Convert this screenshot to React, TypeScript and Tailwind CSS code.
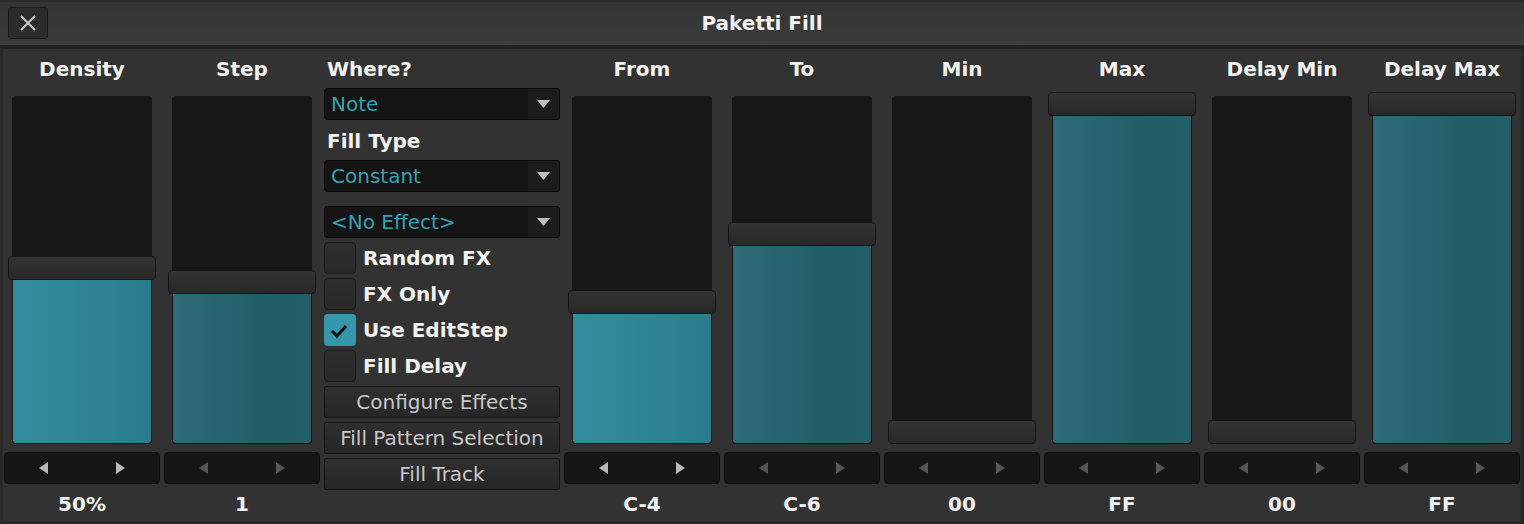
import React from 'react';

type Tone = 'bright' | 'dark';

interface SliderSpec {
  label: string;
  value: string;
  top: number; // handle offset from the top of the slider box, 0..328
  tone: Tone;
}

const FONT = { fontFamily: '"DejaVu Sans", "Liberation Sans", sans-serif' };

// 0 = full, 328 = empty
const leftSliders: SliderSpec[] = [
  { label: 'Density', value: '50%', top: 164, tone: 'bright' },
  { label: 'Step', value: '1', top: 178, tone: 'dark' },
];

const rightSliders: SliderSpec[] = [
  { label: 'From', value: 'C-4', top: 198, tone: 'bright' },
  { label: 'To', value: 'C-6', top: 130, tone: 'dark' },
  { label: 'Min', value: '00', top: 328, tone: 'dark' },
  { label: 'Max', value: 'FF', top: 0, tone: 'dark' },
  { label: 'Delay Min', value: '00', top: 328, tone: 'dark' },
  { label: 'Delay Max', value: 'FF', top: 0, tone: 'dark' },
];

const CloseIcon = () => (
  <svg width="16" height="16" viewBox="0 0 16 16" fill="none">
    <path d="M1 1L15 15M15 1L1 15" stroke="#c9c9c9" strokeWidth="2" />
  </svg>
);

const Triangle = ({ dir, color }: { dir: 'left' | 'right'; color: string }) => (
  <svg width="9" height="12" viewBox="0 0 9 12">
    {dir === 'left' ? (
      <path d="M9 0V12L0 6Z" fill={color} />
    ) : (
      <path d="M0 0V12L9 6Z" fill={color} />
    )}
  </svg>
);

const DownArrow = () => (
  <svg width="13" height="8" viewBox="0 0 13 8">
    <path d="M0 0H13L6.5 8Z" fill="#bfbfbf" />
  </svg>
);

const Slider: React.FC<{ spec: SliderSpec }> = ({ spec }) => {
  const fillHeight = 328 - spec.top;
  const arrowColor = spec.tone === 'bright' ? '#b9b9b9' : '#555555';

  return (
    <div className="flex w-[156px] flex-col">
      <div className="mt-[8px] h-[24px] text-center text-[20px] leading-[24px] font-bold text-[#f2f2f2]">
        {spec.label}
      </div>

      <div className="relative mt-[11px] h-[356px]">
        <div className="relative mx-[8px] my-[4px] h-[348px] overflow-hidden rounded-[4px] bg-[#171717]">
          {fillHeight > 0 && (
            <div
              className={
                spec.tone === 'bright'
                  ? 'absolute right-0 bottom-0 left-0 rounded-b-[4px] border border-t-0 border-[#0f1416] bg-linear-to-r from-[#348d9e] via-[#2e8596] to-[#2a7d8d]'
                  : 'absolute right-0 bottom-0 left-0 rounded-b-[4px] border border-t-0 border-[#0f1416] bg-linear-to-r from-[#2d6c77] via-[#215e68] via-65% to-[#245f69]'
              }
              style={{ height: fillHeight }}
            />
          )}
        </div>
        {/* handle sits over the track */}
        <div
          className="absolute left-[4px] right-[4px] h-[24px] rounded-[4px] border border-[#161616] bg-linear-to-b from-[#333333] via-[#2e2e2e] to-[#282828]"
          style={{ top: spec.top }}
        />
      </div>

      <div className="mt-[4px] flex h-[32px] items-center justify-between rounded-[4px] border border-[#0d0d0d] bg-[#161616] px-[34px]">
        <Triangle dir="left" color={arrowColor} />
        <Triangle dir="right" color={arrowColor} />
      </div>

      <div className="mt-[8px] h-[24px] text-center text-[20px] leading-[24px] font-bold text-[#f2f2f2]">
        {spec.value}
      </div>
    </div>
  );
};

const Dropdown: React.FC<{ text: string; className?: string }> = ({ text, className }) => (
  <div
    className={`flex h-[32px] overflow-hidden rounded-[3px] border border-[#0c0c0c] bg-[#141414] ${className ?? ''}`}
  >
    <div className="flex flex-1 items-center pl-[6px] text-[20px] text-[#37a1b6]">{text}</div>
    <div className="flex w-[31px] items-center justify-center bg-[#1c1c1c]">
      <DownArrow />
    </div>
  </div>
);

const Checkbox: React.FC<{ label: string; checked?: boolean }> = ({ label, checked }) => (
  <div className="flex h-[32px] items-center gap-[7px]">
    {checked ? (
      <div className="flex h-[32px] w-[32px] items-center justify-center rounded-[4px] bg-[#3597ab]">
        <svg width="32" height="32" viewBox="0 0 32 32" fill="none">
          <path d="M8 17L13 22L22 12" stroke="#050505" strokeWidth="3" />
        </svg>
      </div>
    ) : (
      <div className="h-[32px] w-[32px] rounded-[4px] border border-[#1a1a1a] bg-linear-to-b from-[#2e2e2e] to-[#282828]" />
    )}
    <span className="text-[20px] font-bold text-[#f2f2f2]">{label}</span>
  </div>
);

const ActionButton: React.FC<{ label: string }> = ({ label }) => (
  <div className="flex h-[32px] items-center justify-center rounded-[2px] border border-[#141414] bg-linear-to-b from-[#2f2f2f] to-[#262626] text-[20px] text-[#c9c9c9]">
    {label}
  </div>
);

const FillOptions = () => (
  <div className="flex w-[236px] flex-col">
    <div className="mt-[8px] h-[24px] pl-[3px] text-[20px] leading-[24px] font-bold text-[#f2f2f2]">
      Where?
    </div>
    <Dropdown text="Note" className="mt-[7px]" />
    <div className="mt-[9px] h-[24px] pl-[3px] text-[20px] leading-[24px] font-bold text-[#f2f2f2]">
      Fill Type
    </div>
    <Dropdown text="Constant" className="mt-[7px]" />
    <Dropdown text="<No Effect>" className="mt-[14px]" />

    <div className="mt-[4px] flex flex-col gap-[4px]">
      <Checkbox label="Random FX" />
      <Checkbox label="FX Only" />
      <Checkbox label="Use EditStep" checked />
      <Checkbox label="Fill Delay" />
    </div>

    <div className="mt-[4px] flex flex-col gap-[4px]">
      <ActionButton label="Configure Effects" />
      <ActionButton label="Fill Pattern Selection" />
      <ActionButton label="Fill Track" />
    </div>
  </div>
);

export default function App() {
  return (
    <div className="flex h-[524px] w-[1524px] flex-col bg-[#282828]" style={FONT}>
      {/* title bar */}
      <div className="border-t-2 border-[#2a2a2a]">
        <div className="grid h-[42px] grid-cols-[40px_1fr_40px] items-center bg-linear-to-b from-[#333333] to-[#3c3c3c] px-[8px]">
          <div className="flex h-[32px] w-[40px] items-center justify-center rounded-[3px] border border-[#1a1a1a] bg-[#2c2c2c]">
            <CloseIcon />
          </div>
          <div className="text-center text-[20px] font-bold text-[#f2f2f2]">Paketti Fill</div>
          <div />
        </div>
        <div className="h-[1px] bg-[#424242]" />
        <div className="h-[4px] bg-[#222222]" />
      </div>

      <div className="mx-[3px] mb-[3px] flex flex-1 gap-[4px] bg-[#323232] px-[1px]">
        {leftSliders.map((s) => (
          <Slider key={s.label} spec={s} />
        ))}
        <FillOptions />
        {rightSliders.map((s) => (
          <Slider key={s.label} spec={s} />
        ))}
      </div>
    </div>
  );
}
